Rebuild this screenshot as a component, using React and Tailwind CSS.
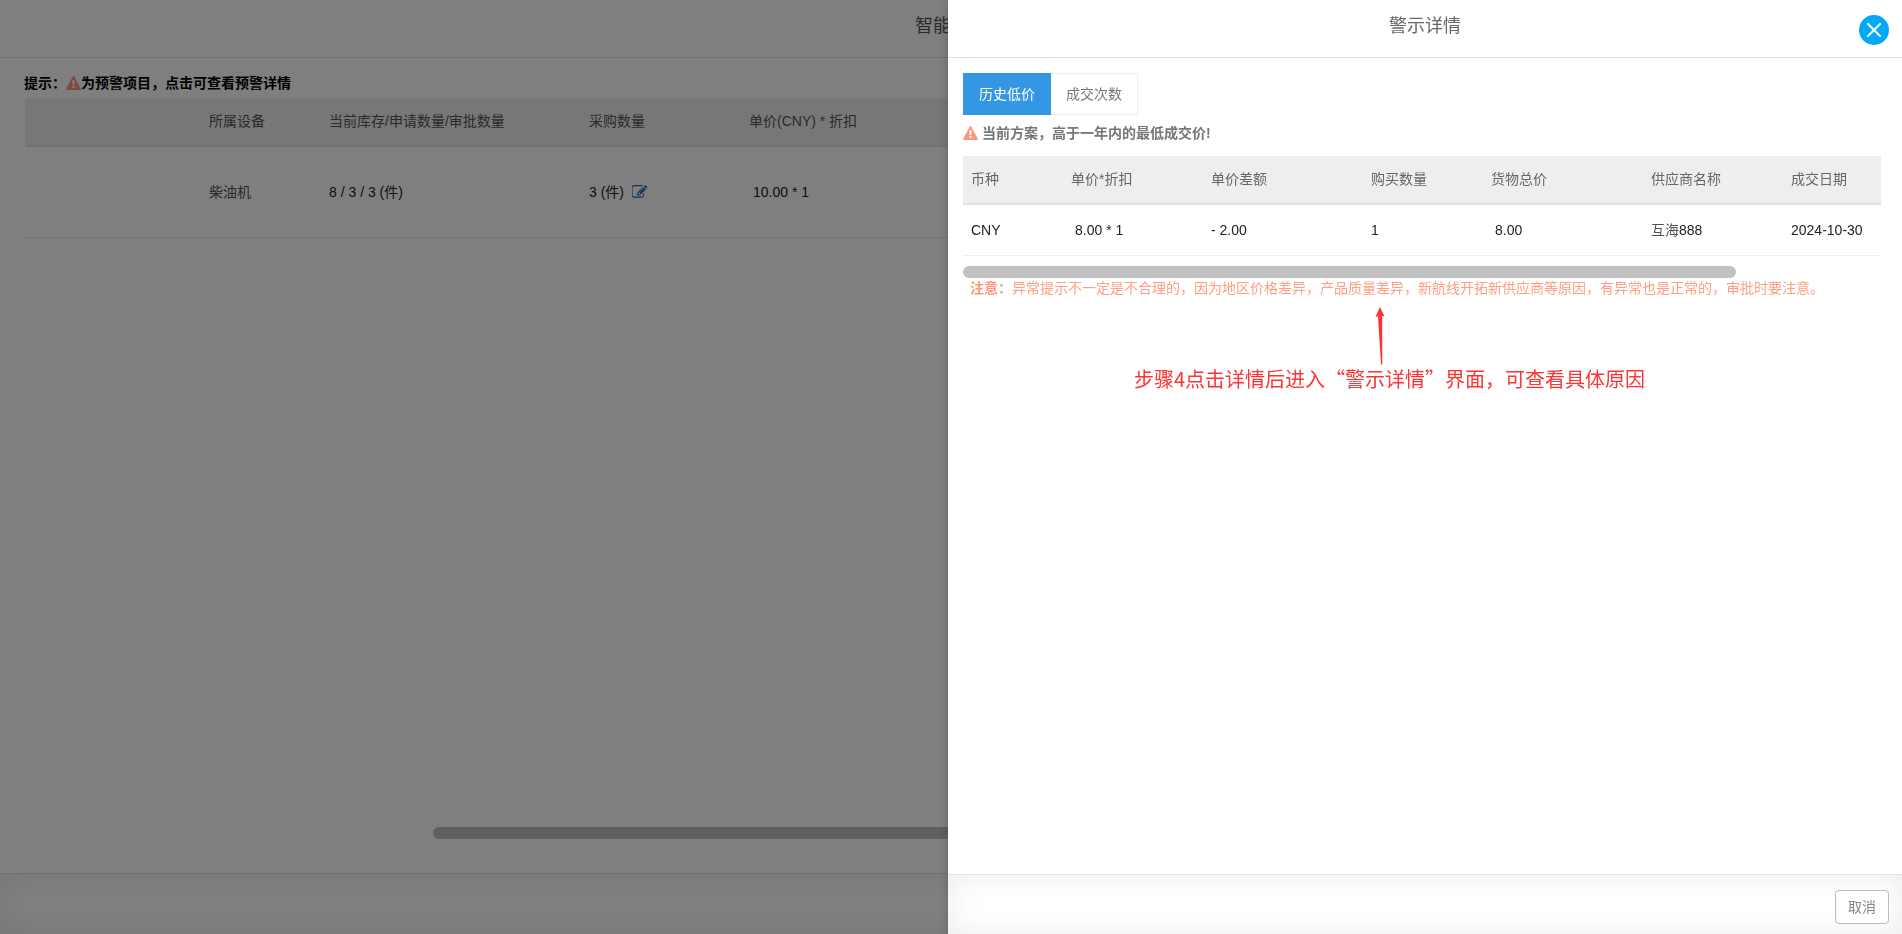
const backgroundColumns = ['', '所属设备', '当前库存/申请数量/审批数量', '采购数量', '单价(CNY) * 折扣'];
const detailColumns = ['币种', '单价*折扣', '单价差额', '购买数量', '货物总价', '供应商名称', '成交日期'];

function WarningIcon() {
  return (
    <svg viewBox="0 0 14 13" className="h-[14px] w-[15px] shrink-0" aria-hidden="true">
      <path d="M6.3.5Q7-.5 7.7.5L13.9 12Q14.2 13 13.2 13H.8Q-.2 13 .1 12Z" fill="#ff967a" />
      <path d="M5.900 4h2.200l-.3 4.300H6.200zM6 9.300h2v1.900H6z" fill="#fff" />
    </svg>
  );
}

function EditIcon() {
  return (
    <svg viewBox="64 128 1664 1536" className="h-[14px] w-[15px] fill-[#2a6aa5]" aria-hidden="true">
      <path d="M888 1184l116-116-152-152-116 116v56h96v96h56zm440-720q-16-16-33 1l-350 350q-17 17-1 33t33-1l350-350q17-17 1-33zm80 594v190q0 119-84.5 203.5t-203.5 84.5h-832q-119 0-203.5-84.5t-84.5-203.5v-832q0-119 84.5-203.5t203.5-84.5h832q63 0 117 25 15 7 18 23 3 17-9 29l-49 49q-14 14-32 8-23-6-45-6h-832q-66 0-113 47t-47 113v832q0 66 47 113t113 47h832q66 0 113-47t47-113v-126q0-13 9-22l64-64q15-15 35-7t20 29zm-96-738l288 288-672 672h-288v-288zm444 132l-92 92-288-288 92-92q28-28 68-28t68 28l152 152q28 28 28 68t-28 68z" />
    </svg>
  );
}

function PurchasePage() {
  return (
    <main className="flex min-h-screen flex-col bg-white">
      <header className="h-[58px] border-b border-[#e2e2e2] pt-3 text-center">
        <h1 className="text-lg text-[#555]">智能推荐</h1>
      </header>
      <div className="flex flex-1 flex-col pt-[15px] pr-6 pb-[34px] pl-[25px]">
        <p className="-ml-px flex h-5 items-center text-sm font-bold text-black">
          提示：
          <WarningIcon />
          为预警项目，点击可查看预警详情
        </p>
        <table className="mt-[5px] w-full table-fixed border-collapse text-left text-sm">
          <colgroup>
            <col className="w-[176px]" />
            <col className="w-[120px]" />
            <col className="w-[260px]" />
            <col className="w-[160px]" />
            <col />
          </colgroup>
          <thead>
            <tr className="h-12 border-b-2 border-[#dfe3e8] bg-[#eee]">
              {backgroundColumns.map((name) => (
                <th key={name} className="px-2 pb-px font-normal text-[#555]">{name}</th>
              ))}
            </tr>
          </thead>
          <tbody>
            <tr className="h-[91px] border-b border-[#e7e7e7] text-[#222]">
              <td />
              <td className="px-2 text-[#555]">柴油机</td>
              <td className="px-2">8 / 3 / 3 (件)</td>
              <td className="px-2">
                <span className="flex items-center gap-2">
                  3 (件)
                  <button type="button" aria-label="编辑采购数量"><EditIcon /></button>
                </span>
              </td>
              <td className="px-3">10.00 * 1</td>
            </tr>
          </tbody>
        </table>
        <div className="mt-auto ml-[408px] h-3 rounded-full bg-[#c1c1c1]" />
      </div>
      <footer className="h-[61px] border-t border-[#e2e2e2] shadow-[inset_0_0_30px_rgba(0,0,0,0.08)]" />
    </main>
  );
}

function Annotation() {
  return (
    <div className="absolute top-[307px] left-[186px] flex flex-col text-[#ff3333]">
      <svg viewBox="0 0 12 58" className="ml-[240px] h-[58px] w-3 fill-current" aria-hidden="true">
        <path d="M6 0L10.500 9.500L8.200 9L8.300 57.500H7L4 9.300L1.500 10Z" />
      </svg>
      <p className="font-['Noto_Sans_CJK_SC',sans-serif] text-xl leading-7 whitespace-nowrap">
        步骤4点击详情后进入“警示详情”界面，可查看具体原因
      </p>
    </div>
  );
}

function DetailDrawer() {
  return (
    <section
      role="dialog"
      aria-labelledby="drawer-title"
      className="fixed inset-y-0 right-0 flex w-[calc(50%+3px)] flex-col bg-white shadow-[0_0_10px_rgba(0,0,0,0.2)]"
    >
      <header className="relative h-[58px] border-b border-[#e2e2e2] pt-3 text-center">
        <h2 id="drawer-title" className="text-lg text-[#666]">警示详情</h2>
        <button
          type="button"
          aria-label="关闭"
          className="absolute top-[15px] right-[13px] flex h-[30px] w-[30px] items-center justify-center rounded-full bg-[#03a9f4]"
        >
          <svg viewBox="0 0 14 14" className="h-[14px] w-[14px]" aria-hidden="true">
            <path d="M1 1L13 13M13 1L1 13" stroke="#fff" strokeWidth="2" strokeLinecap="round" />
          </svg>
        </button>
      </header>
      <div className="flex-1 pt-[15px] pr-[21px] pl-[15px]">
        <div role="tablist" className="flex h-[42px] text-sm">
          <button type="button" role="tab" aria-selected="true" className="bg-[#3397e3] px-4 text-white">
            历史低价
          </button>
          <button
            type="button"
            role="tab"
            aria-selected="false"
            className="border-y border-r border-[#eee] px-[15px] text-[#777]"
          >
            成交次数
          </button>
        </div>
        <p className="mt-2 flex h-5 items-center gap-1 text-sm font-bold text-[#777]">
          <WarningIcon />
          当前方案，高于一年内的最低成交价!
        </p>
        <table className="mt-[13px] w-full table-fixed border-collapse text-left text-sm">
          <colgroup>
            <col className="w-[100px]" />
            <col className="w-[140px]" />
            <col className="w-[160px]" />
            <col className="w-[120px]" />
            <col className="w-[160px]" />
            <col className="w-[140px]" />
            <col />
          </colgroup>
          <thead>
            <tr className="h-12 border-b-2 border-[#dfe3e8] bg-[#eee]">
              {detailColumns.map((name) => (
                <th key={name} className="px-2 pb-px font-normal text-[#666]">{name}</th>
              ))}
            </tr>
          </thead>
          <tbody>
            <tr className="h-[51px] border-b border-[#eee] text-[#222]">
              <td className="px-2">CNY</td>
              <td className="px-3">8.00 * 1</td>
              <td className="px-2">- 2.00</td>
              <td className="px-2">1</td>
              <td className="px-3">8.00</td>
              <td className="px-2"><span className="text-[#555]">互海</span>888</td>
              <td className="px-2">2024-10-30</td>
            </tr>
          </tbody>
        </table>
        <div className="mt-[10px] mr-[145px] h-3 rounded-full bg-[#c1c1c1]" />
        <p className="pl-[7px] text-sm text-[#ff9f85]">
          <b className="font-bold text-[#ff9678]">注意：</b>
          异常提示不一定是不合理的，因为地区价格差异，产品质量差异，新航线开拓新供应商等原因，有异常也是正常的，审批时要注意。
        </p>
      </div>
      <footer className="flex h-[60px] items-start justify-end border-t border-[#e2e2e2] pt-[15px] pr-[13px] shadow-[inset_0_0_30px_rgba(0,0,0,0.08)]">
        <button type="button" className="h-[34px] rounded border border-[#bbb] bg-white px-3 text-sm text-[#888]">
          取消
        </button>
      </footer>
      <Annotation />
    </section>
  );
}

export default function App() {
  return (
    <div className="font-['Liberation_Sans','Noto_Sans_CJK_SC',sans-serif]">
      <PurchasePage />
      <div className="fixed inset-0 bg-black/50" />
      <DetailDrawer />
    </div>
  );
}
